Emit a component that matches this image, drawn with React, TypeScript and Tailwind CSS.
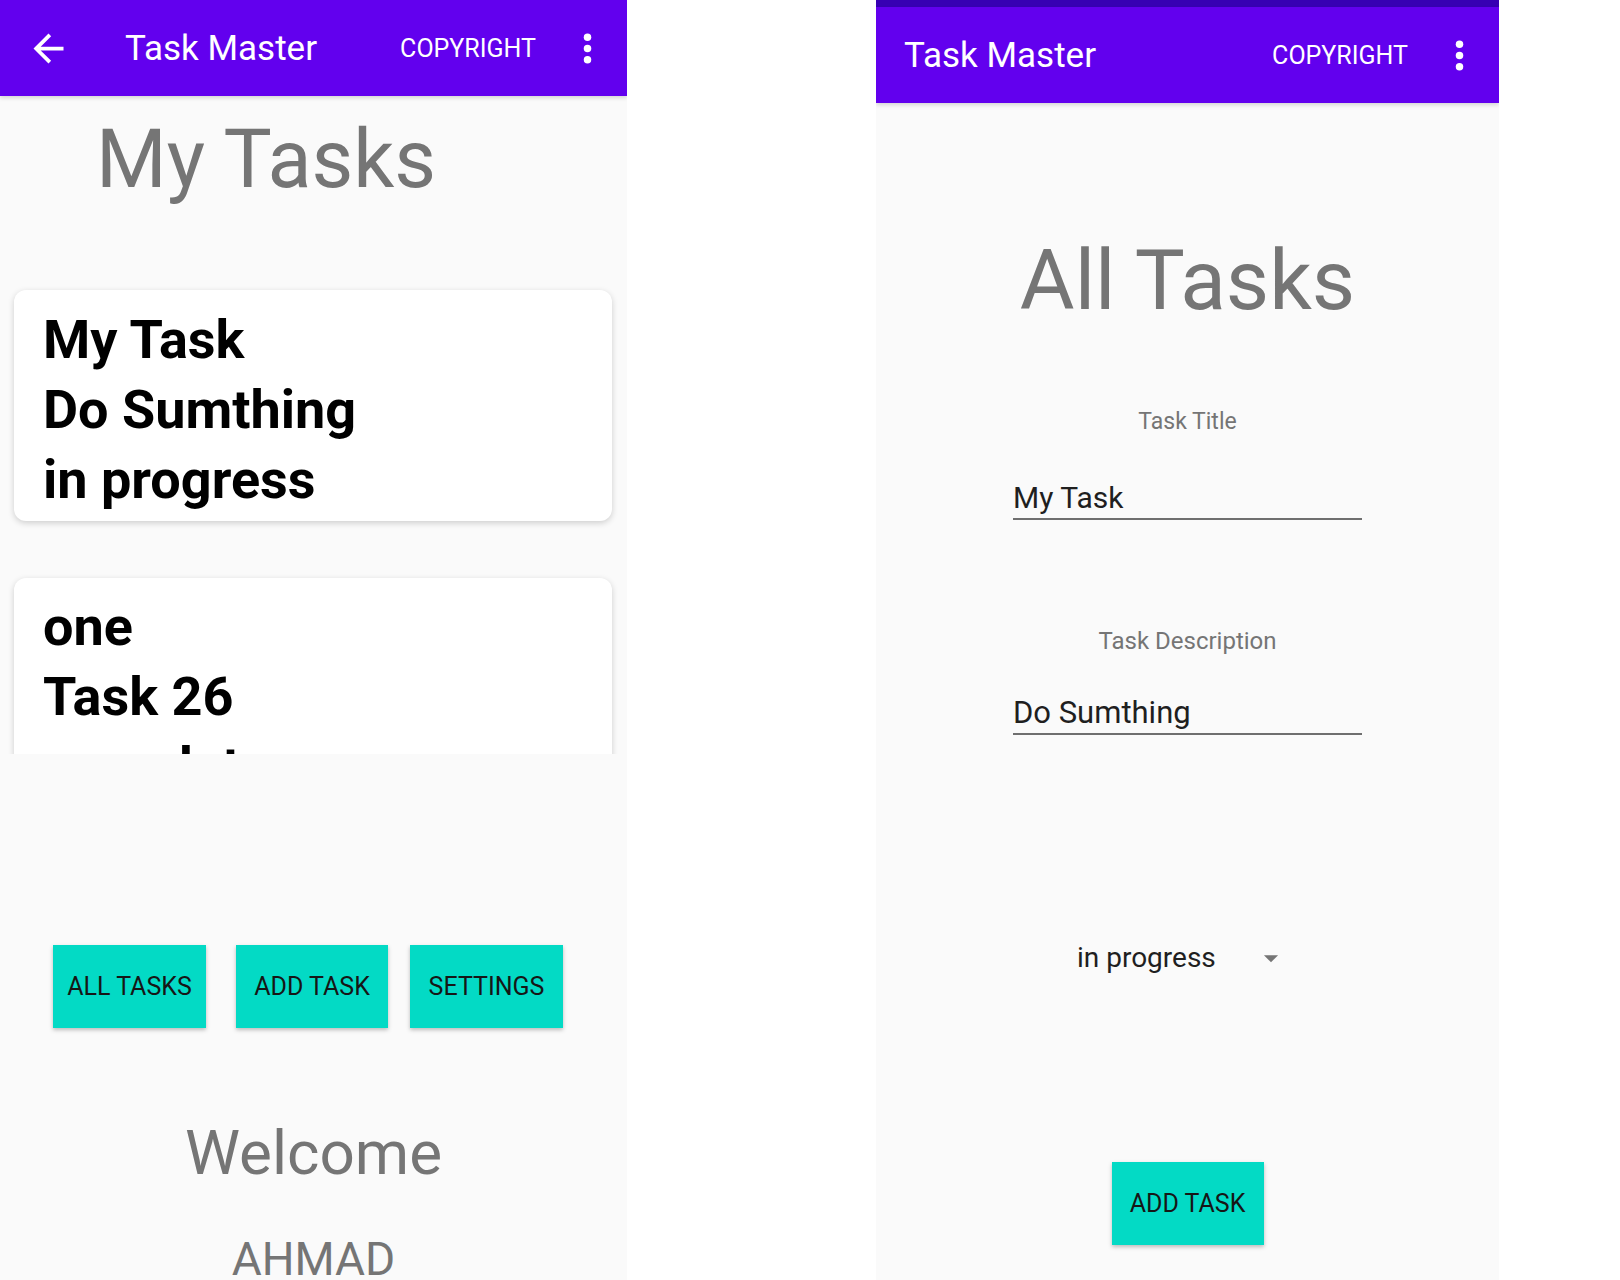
import React from "react";

const font = { fontFamily: "Roboto, 'Noto Sans', sans-serif" };

function BackArrow() {
  return (
    <svg width="45" height="45" viewBox="0 0 24 24" fill="white">
      <path d="M20 11H7.83l5.59-5.59L12 4l-8 8 8 8 1.41-1.41L7.83 13H20v-2z" />
    </svg>
  );
}

function MoreVert() {
  return (
    <svg width="45" height="45" viewBox="0 0 24 24" fill="white">
      <circle cx="12" cy="6" r="2" />
      <circle cx="12" cy="12" r="2" />
      <circle cx="12" cy="18" r="2" />
    </svg>
  );
}

function DropDown() {
  return (
    <svg width="34" height="34" viewBox="0 0 24 24" fill="#757575">
      <path d="M7 10l5 5 5-5z" />
    </svg>
  );
}

function Card({ lines, pt }: { lines: string[]; pt: string }) {
  return (
    <div className={`mx-[14px] mr-[15px] bg-white rounded-xl shadow-[0_2px_6px_rgba(0,0,0,0.18)] pl-[29px] ${pt} pb-[6px] shrink-0`}>
      {lines.map((l) => (
        <div key={l} className="text-[54px] leading-[70px] font-bold text-black">
          {l}
        </div>
      ))}
    </div>
  );
}

function TealButton({ label, w }: { label: string; w: string }) {
  return (
    <div className={`${w} h-[83px] bg-[#03DAC5] shadow-[0_2px_4px_rgba(0,0,0,0.25)] flex items-center justify-center text-[25px] font-normal text-[#161616]`}>
      {label}
    </div>
  );
}

export default function App() {
  return (
    <div className="w-[1620px] h-[1280px] bg-white flex overflow-hidden" style={font}>
      {/* Left phone */}
      <div className="w-[627px] h-[1280px] bg-[#fafafa] flex flex-col overflow-hidden">
        <div className="h-[96px] bg-[#6200EE] flex items-center shrink-0 shadow-[0_2px_4px_rgba(0,0,0,0.15)] relative z-10">
          <div className="ml-[26px] flex items-center">
            <BackArrow />
          </div>
          <div className="ml-[54px] text-white text-[35px] leading-none">Task Master</div>
          <div className="ml-auto text-white text-[25px] leading-none">COPYRIGHT</div>
          <div className="ml-[29px] mr-[17px] flex items-center">
            <MoreVert />
          </div>
        </div>
        <div className="h-[658px] overflow-hidden flex flex-col shrink-0">
          <div className="mt-[23px] pl-[96px] text-[81px] leading-none text-[#757575] shrink-0">My Tasks</div>
          <div className="mt-[90px] flex flex-col">
            <Card lines={["My Task", "Do Sumthing", "in progress"]} pt="pt-[15px]" />
            <div className="h-[57px] shrink-0" />
            <Card lines={["one", "Task 26", "complete"]} pt="pt-[14px]" />
          </div>
        </div>
        <div className="mt-[191px] flex shrink-0">
          <div className="ml-[53px]">
            <TealButton label="ALL TASKS" w="w-[153px]" />
          </div>
          <div className="ml-[30px]">
            <TealButton label="ADD TASK" w="w-[152px]" />
          </div>
          <div className="ml-[22px]">
            <TealButton label="SETTINGS" w="w-[153px]" />
          </div>
        </div>
        <div className="mt-[94px] text-center text-[62px] leading-none text-[#757575] shrink-0">Welcome</div>
        <div className="mt-[52px] text-center text-[46px] leading-none text-[#757575] shrink-0">AHMAD</div>
      </div>

      <div className="w-[249px] shrink-0" />

      {/* Right phone */}
      <div className="w-[623px] h-[1280px] bg-[#fafafa] flex flex-col overflow-hidden shrink-0">
        <div className="h-[7px] bg-[#3700B3] shrink-0" />
        <div className="h-[96px] bg-[#6200EE] flex items-center shrink-0 shadow-[0_2px_4px_rgba(0,0,0,0.15)] relative z-10">
          <div className="ml-[28px] text-white text-[35px] leading-none">Task Master</div>
          <div className="ml-auto text-white text-[25px] leading-none">COPYRIGHT</div>
          <div className="ml-[29px] mr-[17px] flex items-center">
            <MoreVert />
          </div>
        </div>
        <div className="mt-[136px] text-center text-[84px] leading-none text-[#757575] shrink-0">All Tasks</div>
        <div className="mt-[87px] text-center text-[23px] leading-none text-[#757575] shrink-0">Task Title</div>
        <div className="mt-[50px] mx-auto w-[349px] text-[30px] leading-none text-[#1f1f1f] pb-[5px] border-b-2 border-[#6f6f6f] shrink-0">
          My Task
        </div>
        <div className="mt-[109px] text-center text-[24px] leading-none text-[#757575] shrink-0">Task Description</div>
        <div className="mt-[44px] mx-auto w-[349px] text-[31px] leading-none text-[#1f1f1f] pb-[5px] border-b-2 border-[#6f6f6f] shrink-0">
          Do Sumthing
        </div>
        <div className="mt-[209px] flex items-center shrink-0 h-[28px]">
          <div className="ml-[201px] text-[28px] leading-none text-[#1f1f1f]">in progress</div>
          <div className="ml-[38px] flex items-center">
            <DropDown />
          </div>
        </div>
        <div className="mt-[190px] flex justify-center shrink-0">
          <TealButton label="ADD TASK" w="w-[152px]" />
        </div>
      </div>
    </div>
  );
}
